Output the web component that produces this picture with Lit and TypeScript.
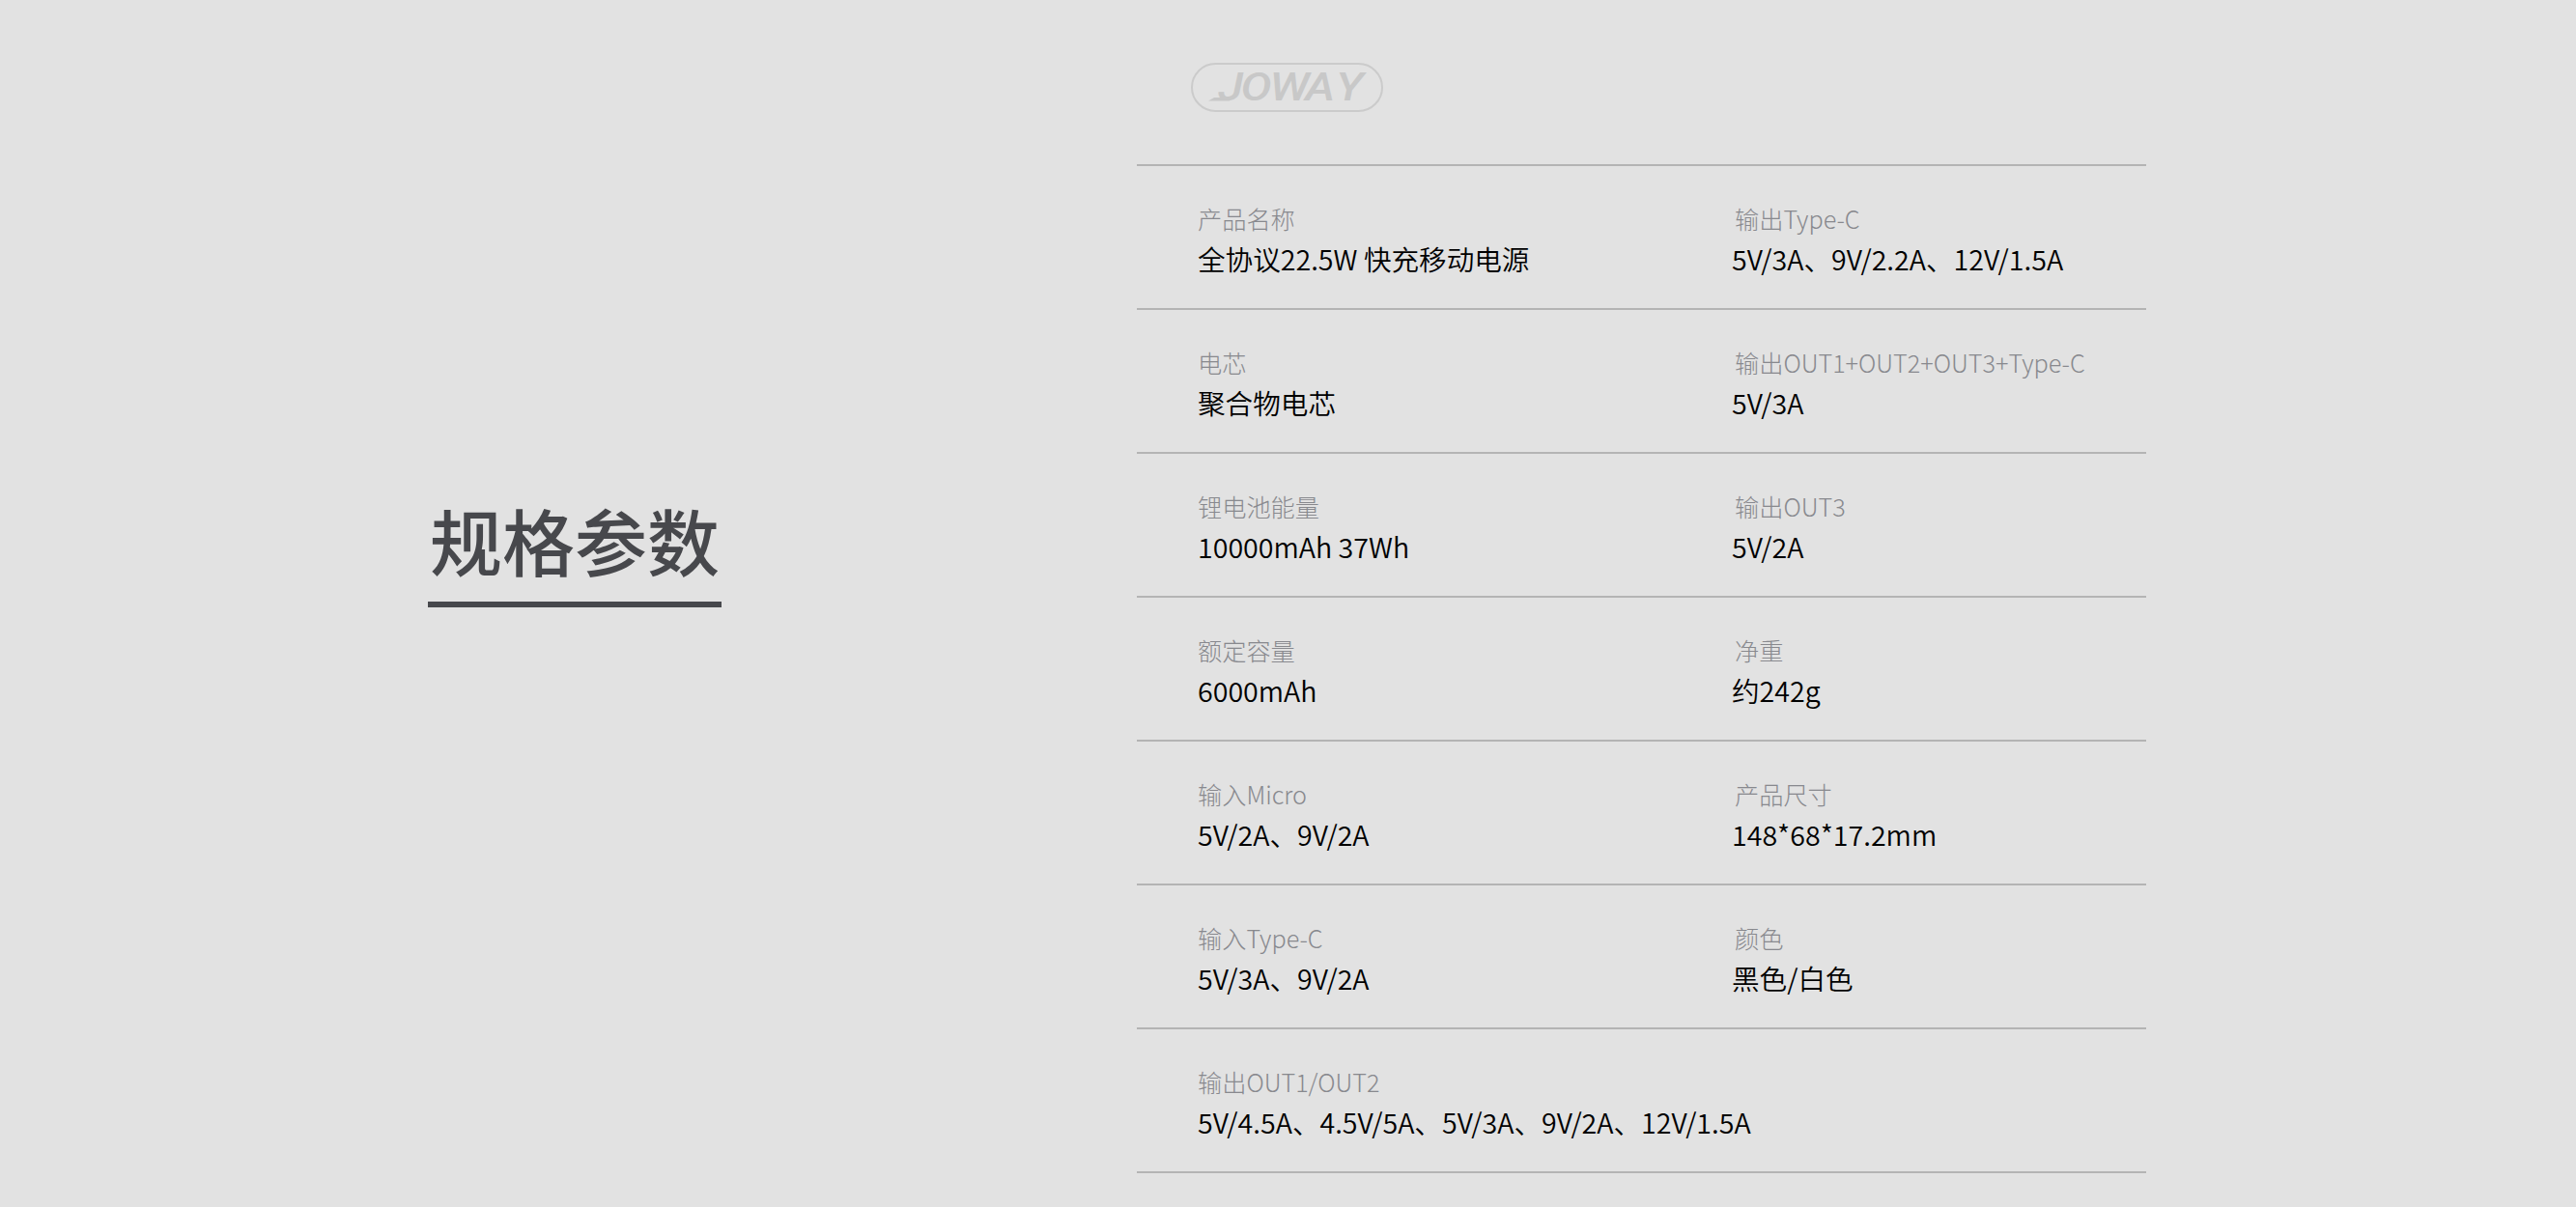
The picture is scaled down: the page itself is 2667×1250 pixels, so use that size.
import { LitElement, html, css, svg } from "lit";
import { customElement } from "lit/decorators.js";

interface Spec { label: string; value: string; }
const rows: Spec[][] = [
  [{ label: "产品名称", value: "全协议22.5W 快充移动电源" }, { label: "输出Type-C", value: "5V/3A、9V/2.2A、12V/1.5A" }],
  [{ label: "电芯", value: "聚合物电芯" }, { label: "输出OUT1+OUT2+OUT3+Type-C", value: "5V/3A" }],
  [{ label: "锂电池能量", value: "10000mAh 37Wh" }, { label: "输出OUT3", value: "5V/2A" }],
  [{ label: "额定容量", value: "6000mAh" }, { label: "净重", value: "约242g" }],
  [{ label: "输入Micro", value: "5V/2A、9V/2A" }, { label: "产品尺寸", value: "148*68*17.2mm" }],
  [{ label: "输入Type-C", value: "5V/3A、9V/2A" }, { label: "颜色", value: "黑色/白色" }],
  [{ label: "输出OUT1/OUT2", value: "5V/4.5A、4.5V/5A、5V/3A、9V/2A、12V/1.5A" }],
];

const logo = svg`<svg class="logo" width="200" height="52" viewBox="0 0 200 52">
  <rect x="1" y="2" width="197" height="49" rx="24.5" fill="none" stroke="#cbcbcb" stroke-width="2"/>
  <path d="M18 40.5 L24 37 L42 37 L40 40.5 Z" fill="#c8c8c8"/>
  <text y="40.5" x="23.5 43 68 98.5 125" transform="scale(1.2 1)" class="logo-text">JOWAY</text>
</svg>`;

@customElement("app-root")
export class AppRoot extends LitElement {
  static styles = css`
    :host {
      display: flex;
      width: 2667px;
      height: 1250px;
      background: #e2e2e2;
      font-family: "Noto Sans CJK SC", "Noto Sans", sans-serif;
      overflow: hidden;
    }
    .left {
      width: 1177px;
      flex: none;
      box-sizing: border-box;
      padding-left: 443px;
      padding-top: 494px;
    }
    .title {
      display: inline-block;
      width: 304px;
      font-size: 75px;
      line-height: 129px;
      font-weight: 500;
      color: #47484c;
      text-align: center;
      white-space: nowrap;
      border-bottom: 6px solid #47484c;
    }
    .right {
      width: 1045px;
      flex: none;
    }
    .head {
      height: 172px;
      box-sizing: border-box;
      padding: 64px 0 0 56px;
      border-bottom: 2px solid #b4b4b4;
    }
    .logo { display: block; }
    .logo-text {
      font-family: "Roboto", "Liberation Sans", sans-serif;
      font-size: 40px;
      font-weight: 500;
      font-style: italic;
      fill: #c8c8c8;
    }
    .row {
      height: 149px;
      box-sizing: border-box;
      display: grid;
      grid-template-columns: 553px 1fr;
      padding: 34px 0 0 63px;
      border-bottom: 2px solid #b4b4b4;
    }
    .label {
      font-size: 25.2px;
      line-height: 41px;
      font-weight: 300;
      color: #88898e;
      white-space: nowrap;
    }
    .value {
      font-size: 28.6px;
      line-height: 42px;
      font-weight: 350;
      color: #000;
      white-space: nowrap;
    }
    .cell + .cell .label { margin-left: 3px; }
  `;

  render() {
    return html`
      <div class="left"><div class="title">规格参数</div></div>
      <div class="right">
        <div class="head">${logo}</div>
        ${rows.map(r => html`<div class="row">
          ${r.map(c => html`<div class="cell">
            <div class="label">${c.label}</div>
            <div class="value">${c.value}</div>
          </div>`)}
        </div>`)}
      </div>
    `;
  }
}
